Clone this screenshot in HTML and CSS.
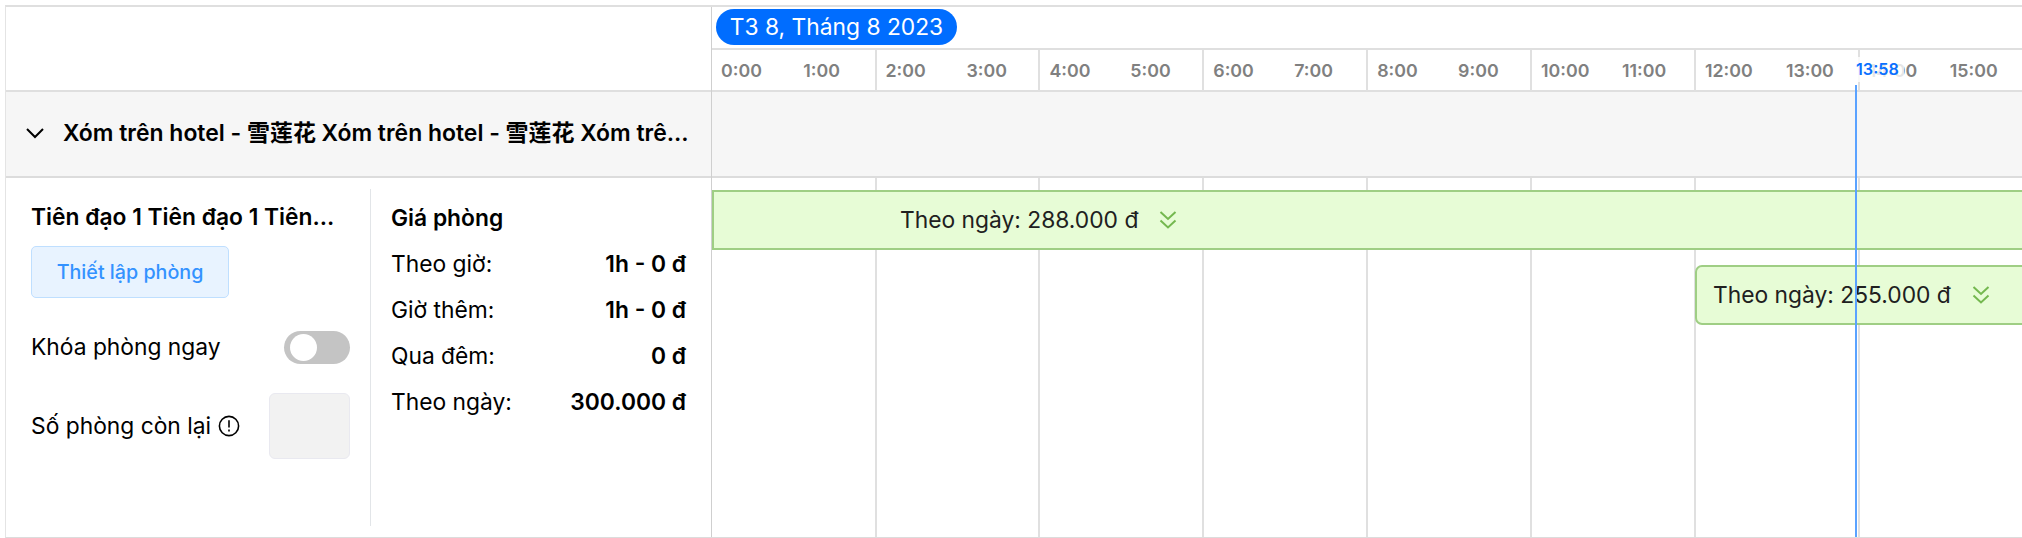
FILE: index.html
```html
<!DOCTYPE html>
<html lang="vi">
<head>
<meta charset="utf-8">
<title>Lịch phòng</title>
<link rel="stylesheet" href="styles.css">
</head>
<body>
<div class="scheduler">
  <div class="sidebar">
    <div class="sidebar-head"></div>
    <div class="group">
      <svg class="chevron" viewBox="0 0 20 14"><path d="M2 3l8 8 8-8"/></svg>
      <div class="group-name">Xóm trên hotel - 雪莲花 Xóm trên hotel - 雪莲花 Xóm trê...</div>
    </div>
    <div class="room">
      <div class="room-info">
        <div class="room-name">Tiên đạo 1 Tiên đạo 1 Tiên...</div>
        <button class="setup">Thiết lập phòng</button>
        <div class="lock-row"><span>Khóa phòng ngay</span><span class="switch"><i class="knob"></i></span></div>
        <div class="left-row">
          <span>Số phòng còn lại</span>
          <svg class="info" viewBox="0 0 22 22"><circle cx="11" cy="11" r="9.6"/><path d="M11 5.200v7.200M11 14.600v2"/></svg>
          <span class="count"></span>
        </div>
      </div>
      <div class="divider"></div>
      <div class="prices">
        <div class="price title">Giá phòng</div>
        <div class="price"><span>Theo giờ:</span><b>1h - 0 đ</b></div>
        <div class="price"><span>Giờ thêm:</span><b>1h - 0 đ</b></div>
        <div class="price"><span>Qua đêm:</span><b>0 đ</b></div>
        <div class="price"><span>Theo ngày:</span><b>300.000 đ</b></div>
      </div>
    </div>
  </div>
  <div class="timeline">
    <div class="date-row"><span class="date">T3 8, Tháng 8 2023</span></div>
    <div class="hours">
      <div class="slot"><span>0:00</span><span>1:00</span></div>
      <div class="slot"><span>2:00</span><span>3:00</span></div>
      <div class="slot"><span>4:00</span><span>5:00</span></div>
      <div class="slot"><span>6:00</span><span>7:00</span></div>
      <div class="slot"><span>8:00</span><span>9:00</span></div>
      <div class="slot"><span>10:00</span><span>11:00</span></div>
      <div class="slot"><span>12:00</span><span>13:00</span></div>
      <div class="slot"><span>14:00</span><span>15:00</span></div>
    </div>
    <div class="group-band"></div>
    <div class="lanes">
      <div class="grid">
        <div class="slot"></div><div class="slot"></div><div class="slot"></div><div class="slot"></div>
        <div class="slot"></div><div class="slot"></div><div class="slot"></div><div class="slot"></div>
      </div>
      <div class="booking full"><span>Theo ngày: 288.000 đ</span><svg class="more" viewBox="0 0 18 20"><path d="M1.500 2L9 9l7.500-7M1.500 10.500L9 17.500l7.500-7"/></svg></div>
      <div class="booking late"><span>Theo ngày: 255.000 đ</span><svg class="more" viewBox="0 0 18 20"><path d="M1.500 2L9 9l7.500-7M1.500 10.500L9 17.500l7.500-7"/></svg></div>
    </div>
    <div class="now-line"></div>
    <div class="now-label">13:58</div>
  </div>
</div>
</body>
</html>
```
FILE: styles.css
```css
* { box-sizing: border-box; }
body {
  margin: 0;
  width: 2022px;
  height: 538px;
  overflow: hidden;
  background: #fff;
  color: #000;
  font: 22.8px/46px Inter, "Noto Sans CJK SC", sans-serif;
}
.scheduler {
  display: flex;
  height: 533px;
  margin: 5px 0 0 5px;
  border-top: 2px solid #dfdfdf;
  border-left: 1px solid #e4e4e4;
  border-bottom: 1px solid #dcdcdc;
}
.sidebar { width: 705px; flex: none; }
.sidebar-head { height: 83px; }
.group, .group-band {
  height: 88px;
  background: #f6f6f6;
  border-top: 2px solid #dfdfdf;
  border-bottom: 2px solid #dcdcdc;
}
.group { display: flex; align-items: center; padding: 0 0 2px 19px; }
.chevron { width: 20px; height: 14px; fill: none; stroke: #000; stroke-width: 2; margin-right: 18px; }
.group-name { font-weight: 600; font-size: 22.95px; white-space: nowrap; }
.room { display: flex; height: 359px; }
.room-info { width: 344px; padding: 16px 0 0 25px; }
.room-name { font-weight: 600; white-space: nowrap; }
.setup {
  display: block;
  width: 198px;
  height: 52px;
  margin-top: 6px;
  padding: 0;
  border: 1.6px solid #bfdfff;
  border-radius: 5px;
  background: #e8f3ff;
  color: #3392ff;
  font: 500 19.7px/46px Inter, sans-serif;
}
.lock-row { display: flex; justify-content: space-between; align-items: center; margin-top: 26px; }
.switch { width: 66px; height: 33px; padding: 3px 6px; border-radius: 17px; background: #c4c4c4; }
.knob { display: block; width: 27px; height: 27px; border-radius: 50%; background: #fff; }
.left-row { display: flex; align-items: center; margin-top: 23px; }
.info { width: 22px; height: 22px; margin-left: 7px; fill: none; stroke: #000; stroke-width: 1.6; }
.count { width: 81px; height: 66px; margin-left: auto; border: 1.6px solid #e9e9f0; border-radius: 6px; background: #f2f2f2; }
.room-info + .divider { width: 1px; height: 337px; margin: 11px 0 0 20px; background: #e2e5e8; }
.prices { width: 295px; margin: 17px 0 0 20px; }
.price { display: flex; justify-content: space-between; }
.price b, .title { font-weight: 600; }
.timeline { position: relative; flex: 1; overflow: hidden; border-left: 1px solid #cfcfcf; }
.date-row { height: 41px; padding: 2px 0 0 4px; }
.date { display: block; width: 241px; height: 36px; border-radius: 18px; background: #006dff; color: #fff; line-height: 36px; text-align: center; }
.hours, .grid { display: grid; grid-template-columns: 162.500px repeat(7, 163.9px); }
.hours { height: 42px; border-top: 2px solid #dfdfdf; color: #808080; font-size: 17.8px; font-weight: 600; line-height: 41px; }
.slot { display: grid; grid-template-columns: 1fr 1fr; }
.slot span { padding-left: 9px; }
.slot span + span { padding-left: 10px; }
.slot + .slot { border-left: 2px solid #e0e0e0; }
.slot + .slot span + span { padding-left: 9px; }
.lanes { position: relative; height: 359px; }
.grid { height: 359px; }
.booking {
  position: absolute;
  right: -10px;
  display: flex;
  align-items: center;
  height: 60px;
  border: 2px solid #9fce84;
  background: #e7fcd6;
  color: #202020;
}
.full { top: 12px; left: 0; padding-left: 186px; }
.late { top: 87px; left: 983px; padding-left: 16px; border-radius: 7px; }
.more { width: 18px; height: 20px; margin-left: 21px; fill: none; stroke: #74b84f; stroke-width: 2; }
.now-line { position: absolute; left: 1143px; top: 78px; bottom: 0; width: 2px; background: #5aa2ff; }
.now-label { position: absolute; left: 1143px; top: 50px; width: 49px; height: 25px; padding-left: 1px; background: rgba(255,255,255,.8); color: #0a70ff; font-size: 16.2px; font-weight: 600; line-height: 25px; }
```
